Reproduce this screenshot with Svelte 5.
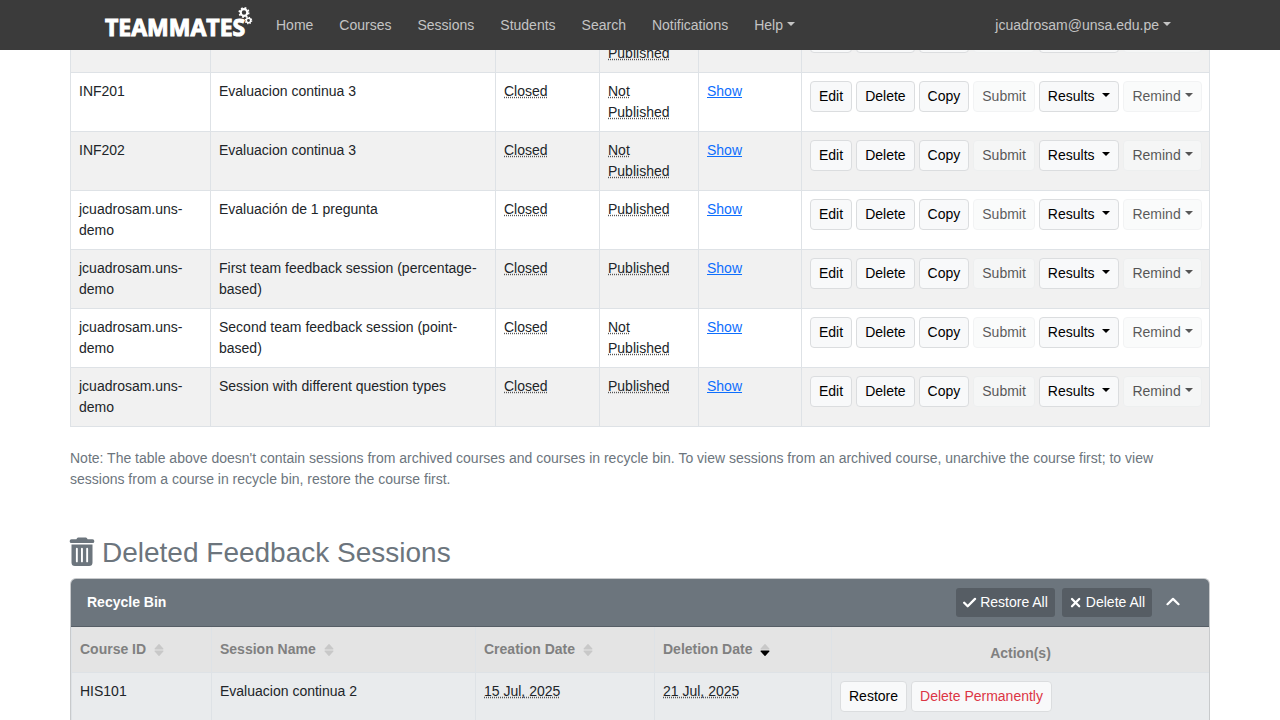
<script>
  const links = ['Home', 'Courses', 'Sessions', 'Students', 'Search', 'Notifications'];

  const sessions = [
    { course: '', name: '', published: false },
    { course: 'INF201', name: 'Evaluacion continua 3', published: false },
    { course: 'INF202', name: 'Evaluacion continua 3', published: false },
    { course: 'jcuadrosam.uns-demo', name: 'Evaluación de 1 pregunta', published: true },
    { course: 'jcuadrosam.uns-demo', name: 'First team feedback session (percentage-based)', published: true },
    { course: 'jcuadrosam.uns-demo', name: 'Second team feedback session (point-based)', published: false },
    { course: 'jcuadrosam.uns-demo', name: 'Session with different question types', published: true }
  ];

  const sortable = ['Course ID', 'Session Name', 'Creation Date', 'Deletion Date'];
  let sortedBy = $state('Deletion Date');

  const deleted = [
    { course: 'HIS101', name: 'Evaluacion continua 2', created: '15 Jul, 2025', removed: '21 Jul, 2025' }
  ];
  let expanded = $state(true);
</script>

<header class="navbar">
  <div class="nav-inner">
    <a class="brand" href="#home" aria-label="TEAMMATES">
      <svg width="148" height="34" viewBox="0 0 148 34">
        <text x="0" y="28" class="wordmark">TEAMMATES</text>
        <g fill="none" stroke="#fff">
          <circle cx="139" cy="4.500" r="3.300" stroke-width="2.200" />
          <circle cx="139" cy="4.500" r="4.700" stroke-width="1.700" stroke-dasharray="1.850 1.841" />
          <circle cx="143.500" cy="12.500" r="2.200" stroke-width="1.500" />
          <circle cx="143.500" cy="12.500" r="3.200" stroke-width="1.200" stroke-dasharray="1.257 1.256" />
        </g>
      </svg>
    </a>
    <nav>
      {#each links as link}
        <a href="#{link.toLowerCase()}">{link}</a>
      {/each}
      <button class="nav-drop">Help<span class="caret"></span></button>
    </nav>
    <button class="nav-drop account">jcuadrosam@unsa.edu.pe<span class="caret"></span></button>
  </div>
</header>

<div class="viewport">
  <main>
    <table class="sessions">
      <colgroup>
        <col class="c-course" /><col class="c-name" /><col class="c-status" /><col class="c-pub" /><col class="c-rate" /><col />
      </colgroup>
      <tbody>
        {#each sessions as s}
          <tr>
            <td>{s.course}</td>
            <td>{s.name}</td>
            <td><abbr>Closed</abbr></td>
            <td><abbr>{s.published ? 'Published' : 'Not Published'}</abbr></td>
            <td><a href="#rate">Show</a></td>
            <td>
              <div class="actions">
                <button class="btn">Edit</button>
                <button class="btn">Delete</button>
                <button class="btn">Copy</button>
                <button class="btn" disabled>Submit</button>
                <button class="btn">Results&nbsp;<span class="caret"></span></button>
                <button class="btn" disabled>Remind<span class="caret"></span></button>
              </div>
            </td>
          </tr>
        {/each}
      </tbody>
    </table>

    <p class="note">
      Note: The table above doesn't contain sessions from archived courses and courses in recycle bin. To view sessions
      from an archived course, unarchive the course first; to view sessions from a course in recycle bin, restore the
      course first.
    </p>

    <h2>
      <svg width="24" height="28" viewBox="0 1.500 24 28" aria-hidden="true">
        <path fill="currentColor" d="M8.200 0h7.600q.8 0 1.200.7l.6 1.100H22.500a1.800 1.800 0 0 1 0 3.700h-21a1.800 1.800 0 0 1 0-3.700H6.400L7 .7Q7.400 0 8.200 0z" />
        <path fill="currentColor" fill-rule="evenodd" d="M1.500 7h21v18a3.500 3.500 0 0 1-3.500 3.500H5A3.500 3.500 0 0 1 1.500 25zM5.900 11.300v12.600a.95.95 0 0 0 1.900 0V11.300a.95.95 0 0 0-1.900 0zM11 11.300v12.600a.95.95 0 0 0 1.900 0V11.300a.95.95 0 0 0-1.900 0zM16.200 11.300v12.600a.95.95 0 0 0 1.900 0V11.300a.95.95 0 0 0-1.900 0z" />
      </svg>
      Deleted Feedback Sessions
    </h2>

    <section class="card">
      <div class="card-head">
        <strong>Recycle Bin</strong>
        <div class="tools">
          <button class="dark">
            <svg width="14" height="14" viewBox="0 0 14 14" aria-hidden="true"><path d="M1.200 6.700 4.700 10.200 12 2.900" fill="none" stroke="currentColor" stroke-width="2.300" stroke-linecap="round" stroke-linejoin="round" /></svg>
            Restore All
          </button>
          <button class="dark">
            <svg width="14" height="14" viewBox="0 0 14 14" aria-hidden="true"><path d="M3 3l7.200 7.200M10.200 3 3 10.200" fill="none" stroke="currentColor" stroke-width="2.300" stroke-linecap="round" /></svg>
            Delete All
          </button>
          <button class="toggle" aria-label="Toggle recycle bin" onclick={() => (expanded = !expanded)}>
            <svg width="14" height="14" viewBox="0 0 14 14" aria-hidden="true"><path d="M1.500 8.200 7 2.900 12.500 8.200" fill="none" stroke="currentColor" stroke-width="2.200" stroke-linecap="round" stroke-linejoin="round" /></svg>
          </button>
        </div>
      </div>
      {#if expanded}
        <table class="deleted">
          <colgroup>
            <col class="d-course" /><col class="d-name" /><col class="d-created" /><col class="d-removed" /><col />
          </colgroup>
          <thead>
            <tr>
              {#each sortable as head}
                <th>
                  <button class="sort" onclick={() => (sortedBy = head)}>
                    {head}
                    <svg width="10" height="14" viewBox="0 0 10 14" aria-hidden="true">
                      <path d="M1 6.400h8q.9-.1.3-.9L5.500 1.300Q5 .8 4.500 1.300L.7 5.500Q.1 6.300 1 6.400z" fill="#c8c8c8" />
                      <path d="M1 7.600h8q.9.1.3.9L5.500 12.700Q5 13.200 4.500 12.700L.7 8.500Q.1 7.700 1 7.600z" fill={sortedBy === head ? '#000' : '#c8c8c8'} />
                    </svg>
                  </button>
                </th>
              {/each}
              <th class="last">Action(s)</th>
            </tr>
          </thead>
          <tbody>
            {#each deleted as d}
              <tr>
                <td>{d.course}</td>
                <td>{d.name}</td>
                <td><abbr>{d.created}</abbr></td>
                <td><abbr>{d.removed}</abbr></td>
                <td>
                  <div class="actions">
                    <button class="btn">Restore</button>
                    <button class="btn danger">Delete Permanently</button>
                  </div>
                </td>
              </tr>
            {/each}
          </tbody>
        </table>
      {/if}
    </section>
  </main>
</div>

<style>
  :global(body) {
    background: #fff;
    color: #212529;
    font: 14px/21px "Liberation Sans", Arial, sans-serif;
  }
  button {
    font: inherit;
    color: inherit;
    border: 0;
    background: none;
    padding: 0;
    white-space: nowrap;
    cursor: pointer;
  }
  .navbar {
    background: #3b3b3b;
    color: #c4c4c4;
  }
  .nav-inner {
    display: flex;
    align-items: center;
    max-width: 1070px;
    height: 50px;
    margin: 0 auto;
  }
  .brand {
    display: flex;
    margin-right: 23px;
  }
  .brand svg { overflow: visible; }
  .wordmark {
    font: 700 23px "Open Sans", sans-serif;
    fill: #fff;
    stroke: #fff;
    stroke-width: 1px;
  }
  nav {
    display: flex;
    gap: 26px;
  }
  nav a {
    color: inherit;
    text-decoration: none;
  }
  .account {
    margin-left: auto;
    margin-right: 4px;
  }
  .caret {
    display: inline-block;
    margin-left: 4px;
    vertical-align: 4px;
    border: 4px solid transparent;
    border-top-color: currentColor;
    border-bottom: 0;
  }
  .viewport { overflow: hidden; }
  main {
    max-width: 1140px;
    margin: -37px auto 0;
  }
  table {
    width: 100%;
    border-collapse: collapse;
    table-layout: fixed;
  }
  td, th {
    padding: 8px;
    border: 1px solid #dee2e6;
    text-align: left;
    vertical-align: top;
  }
  .c-course { width: 140px; }
  .c-name { width: 285px; }
  .c-status { width: 104px; }
  .c-pub { width: 99px; }
  .c-rate { width: 103px; }
  .sessions tr:nth-child(odd) { background: #f1f1f1; }
  td a { color: #0d6efd; }
  abbr {
    text-decoration: underline dotted #555;
    text-decoration-skip-ink: none;
  }
  .actions {
    display: flex;
    gap: 4px;
  }
  .btn {
    padding: 4px 8px;
    border: 1px solid #dbdddf;
    border-radius: 4px;
    background: #f8f9fa;
    color: #000;
  }
  .btn:disabled { opacity: .65; border-color: #eceeef; }
  .danger { color: #dc3545; }
  .note {
    margin: 21px 0 46px;
    color: #6c757d;
  }
  h2 {
    display: flex;
    align-items: center;
    gap: 8px;
    margin: 0 0 8px;
    font-size: 28px;
    line-height: 34px;
    font-weight: 400;
    color: #6c757d;
  }
  h2 svg { overflow: visible; }
  .card {
    border: 1px solid #c8cacc;
    border-bottom: 0;
    border-radius: 6px 6px 0 0;
    background: #e9ebed;
    overflow: hidden;
  }
  .card-head {
    display: flex;
    align-items: center;
    justify-content: space-between;
    padding: 9px 29px 9px 16px;
    border-bottom: 1px solid #565e66;
    background: #6c757d;
    color: #fff;
  }
  .tools {
    display: flex;
    align-items: center;
    gap: 7px;
  }
  .dark {
    display: flex;
    align-items: center;
    gap: 3px;
    padding: 4px 7px;
    border-radius: 3px;
    background: #565d64;
  }
  .toggle {
    display: flex;
    margin-left: 7px;
  }
  .d-course { width: 140px; }
  .d-name { width: 264px; }
  .d-created { width: 179px; }
  .d-removed { width: 177px; }
  .deleted tr > :last-child { border-right: 0; }
  thead th {
    border-top: 0;
    background: #e4e4e4;
    color: #808080;
  }
  .last {
    text-align: center;
    vertical-align: bottom;
  }
  .sort {
    display: flex;
    align-items: center;
    gap: 8px;
    padding: 4px 0;
    font-weight: 700;
  }
</style>
